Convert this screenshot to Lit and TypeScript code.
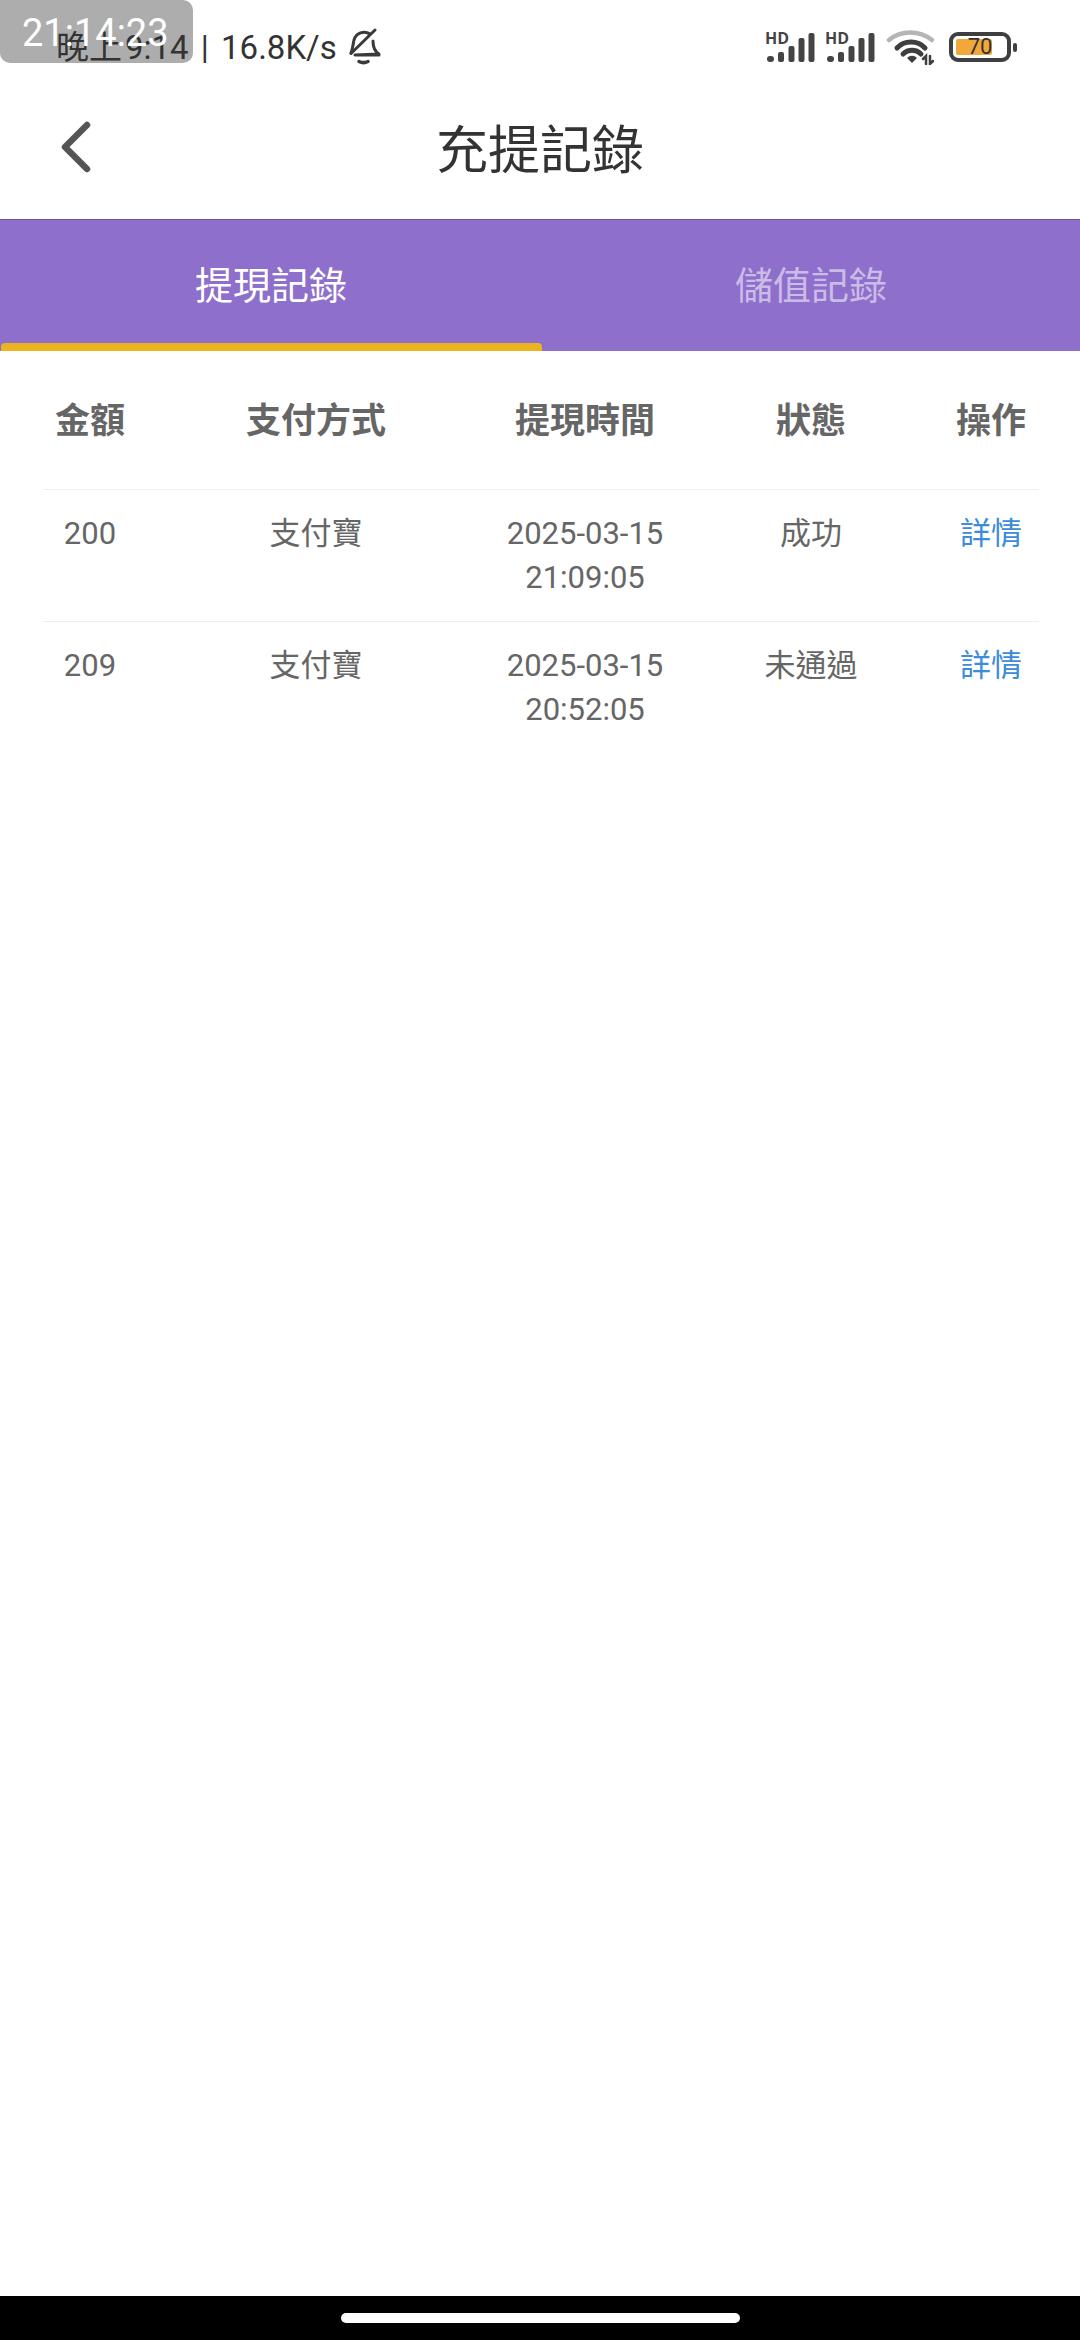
import { LitElement, html, css, svg } from 'lit';
import { customElement } from 'lit/decorators.js';

const rows = [
  { amount: '200', method: '支付寶', date: '2025-03-15 21:09:05', status: '成功' },
  { amount: '209', method: '支付寶', date: '2025-03-15 20:52:05', status: '未通過' },
];

const signal = svg`
  <rect x="2" y="24" width="7" height="6" rx="3" />
  <rect x="13" y="20" width="6" height="10" rx="2" />
  <rect x="23.5" y="14" width="6" height="16" rx="2" />
  <rect x="33.5" y="6" width="6" height="24" rx="2" />
  <rect x="43.5" y="1" width="6" height="29" rx="2" />
`;

@customElement('app-root')
export class AppRoot extends LitElement {
  static styles = css`
    :host {
      display: flex;
      flex-direction: column;
      width: 1080px;
      height: 2340px;
      background: #fff;
      font-family: Roboto, 'Noto Sans CJK TC', sans-serif;
      position: relative;
    }

    /* floating clock sits over the status bar */
    .clock {
      position: absolute;
      left: 0;
      top: 0;
      z-index: 0;
      width: 193px;
      height: 63px;
      border-radius: 0 10px 10px 10px;
      background: #adadad;
    }

    .clock-text {
      position: absolute;
      left: 22px;
      top: 11px;
      z-index: 2;
      font-size: 38px;
      line-height: 44px;
      color: #fff;
    }

    .status {
      position: relative;
      z-index: 1;
      display: flex;
      height: 70px;
      padding: 26px 63px 0 56px;
      box-sizing: border-box;
      color: #333;
      font-size: 33px;
    }

    .status-text {
      white-space: pre;
      line-height: 44px;
      word-spacing: 4px;
    }

    .status-cn {
      margin-right: 3px;
    }

    .bell {
      width: 38px;
      height: 38px;
      margin: 2px 0 0 11px;
    }

    .status-right {
      margin-left: auto;
      margin-top: 6px;
      display: flex;
      align-items: flex-start;
    }

    .sim {
      position: relative;
      width: 50px;
      height: 30px;
      margin-right: 10px;
    }

    .sim svg {
      position: absolute;
      left: 0;
      top: 0;
      width: 50px;
      height: 30px;
      fill: #444;
    }

    .hd {
      position: absolute;
      left: 0;
      top: -2px;
      font: 700 16px/16px 'Open Sans', sans-serif;
      color: #444;
    }

    .wifi {
      width: 48px;
      height: 36px;
      margin: -3px 15px 0 1px;
    }

    .battery {
      position: relative;
      box-sizing: border-box;
      width: 62px;
      height: 30px;
      border: 4px solid #3f3f3f;
      border-radius: 9px;
    }

    .battery-fill {
      position: absolute;
      left: 3px;
      top: 3px;
      bottom: 3px;
      width: 36px;
      border-radius: 2px;
      background: #f1a83b;
    }

    .battery-num {
      position: absolute;
      left: 0;
      right: 0;
      top: -3px;
      text-align: center;
      font-size: 22px;
      line-height: 28px;
      color: #333;
    }

    .nub {
      width: 4px;
      height: 9px;
      margin: 11px 0 0 2px;
      border-radius: 2px;
      background: #3f3f3f;
    }

    .header {
      position: relative;
      display: flex;
      align-items: center;
      justify-content: center;
      height: 149px;
    }

    .back {
      position: absolute;
      left: 56px;
      top: 46px;
      width: 40px;
      height: 60px;
      fill: none;
      stroke: #555;
      stroke-width: 6.5;
      stroke-linecap: round;
      stroke-linejoin: round;
    }

    .title {
      font-size: 52px;
      color: #333;
      line-height: 60px;
      margin-top: 15px;
    }

    .tabs {
      display: flex;
      height: 132px;
      box-sizing: border-box;
      background: #8e6fcc;
      border-top: 1px solid #6c5596;
    }

    .tab {
      flex: 1;
      display: flex;
      align-items: center;
      justify-content: center;
      padding-bottom: 6px;
      font-size: 38px;
      color: rgba(255, 255, 255, 0.55);
      position: relative;
    }

    .tab.active {
      flex: 0 0 542px;
      color: #fff;
    }

    .tab.active::after {
      content: '';
      position: absolute;
      left: 1px;
      right: 0;
      bottom: 0;
      height: 8px;
      border-radius: 4px 4px 0 0;
      background: #ebb31f;
    }

    .table {
      flex: 1;
      padding: 0 41px 0 43px;
    }

    .row {
      display: grid;
      grid-template-columns: 94px 358px 180px 272px 88px;
      text-align: center;
      color: #666;
      font-size: 31px;
      line-height: 44px;
      border-bottom: 1px solid #eeeeee;
      padding-top: 22px;
      height: 132px;
      box-sizing: border-box;
    }

    .row:last-child {
      border-bottom: none;
    }

    .row.head {
      height: 139px;
      padding: 3px 0 0;
      align-items: center;
      font-size: 35px;
      font-weight: 700;
    }

    .link {
      color: #3c8cdb;
    }

    .nav {
      display: flex;
      align-items: center;
      justify-content: center;
      height: 44px;
      background: #000;
    }

    .pill {
      width: 399px;
      height: 10px;
      border-radius: 5px;
      background: #fff;
    }
  `;

  render() {
    return html`
      <div class="clock"></div>
      <div class="clock-text">21:14:23</div>
      <div class="status">
        <span class="status-text"><span class="status-cn">晚上</span>9:14 | 16.8K/s</span>
        <svg class="bell" viewBox="0 0 38 38" fill="none" stroke="#3a3a3a" stroke-width="3" stroke-linecap="round" stroke-linejoin="round">
          <path d="M3 25 C5 20 5 16 6 12 C8 5 16 2 22 6" />
          <path d="M25 13 C25 18 26 23 31 26 L7 27 H31" />
          <path d="M27 2 L3 25.5" />
          <path d="M11 33.5 C14 35 17 35 20 33.5" stroke-width="3.5" />
        </svg>
        <div class="status-right">
          <div class="sim"><svg viewBox="0 0 50 30">${signal}</svg><span class="hd">HD</span></div>
          <div class="sim"><svg viewBox="0 0 50 30">${signal}</svg><span class="hd">HD</span></div>
          <svg class="wifi" viewBox="0 0 48 36" fill="none" stroke-linecap="round">
            <path d="M3 11 C15 1 33 1 46 11" stroke="#b5b5b5" stroke-width="4.5" />
            <path d="M11 19 C18 11 32 11 39 19" stroke="#3f3f3f" stroke-width="5" />
            <path d="M17 25 C22 20 30 20 35 25" stroke="#3f3f3f" stroke-width="5" />
            <path d="M21 29 L26 34 L31 29 C28 26 24 26 21 29 Z" fill="#3f3f3f" stroke="none" />
            <path d="M40 35 V27 L37 30 M44 27 V35 L47 32" stroke="#3f3f3f" stroke-width="2.5" />
          </svg>
          <div class="battery">
            <div class="battery-fill"></div>
            <div class="battery-num">70</div>
          </div>
          <div class="nub"></div>
        </div>
      </div>
      <div class="header">
        <svg class="back" viewBox="0 0 40 60"><path d="M31 9 L9 31 L31 53" /></svg>
        <div class="title">充提記錄</div>
      </div>
      <div class="tabs">
        <div class="tab active">提現記錄</div>
        <div class="tab">儲值記錄</div>
      </div>
      <div class="table">
        <div class="row head">
          <div>金額</div>
          <div>支付方式</div>
          <div>提現時間</div>
          <div>狀態</div>
          <div>操作</div>
        </div>
        ${rows.map(
          (r) => html`
            <div class="row">
              <div>${r.amount}</div>
              <div>${r.method}</div>
              <div>${r.date}</div>
              <div>${r.status}</div>
              <div class="link">詳情</div>
            </div>
          `
        )}
      </div>
      <div class="nav"><div class="pill"></div></div>
    `;
  }
}
